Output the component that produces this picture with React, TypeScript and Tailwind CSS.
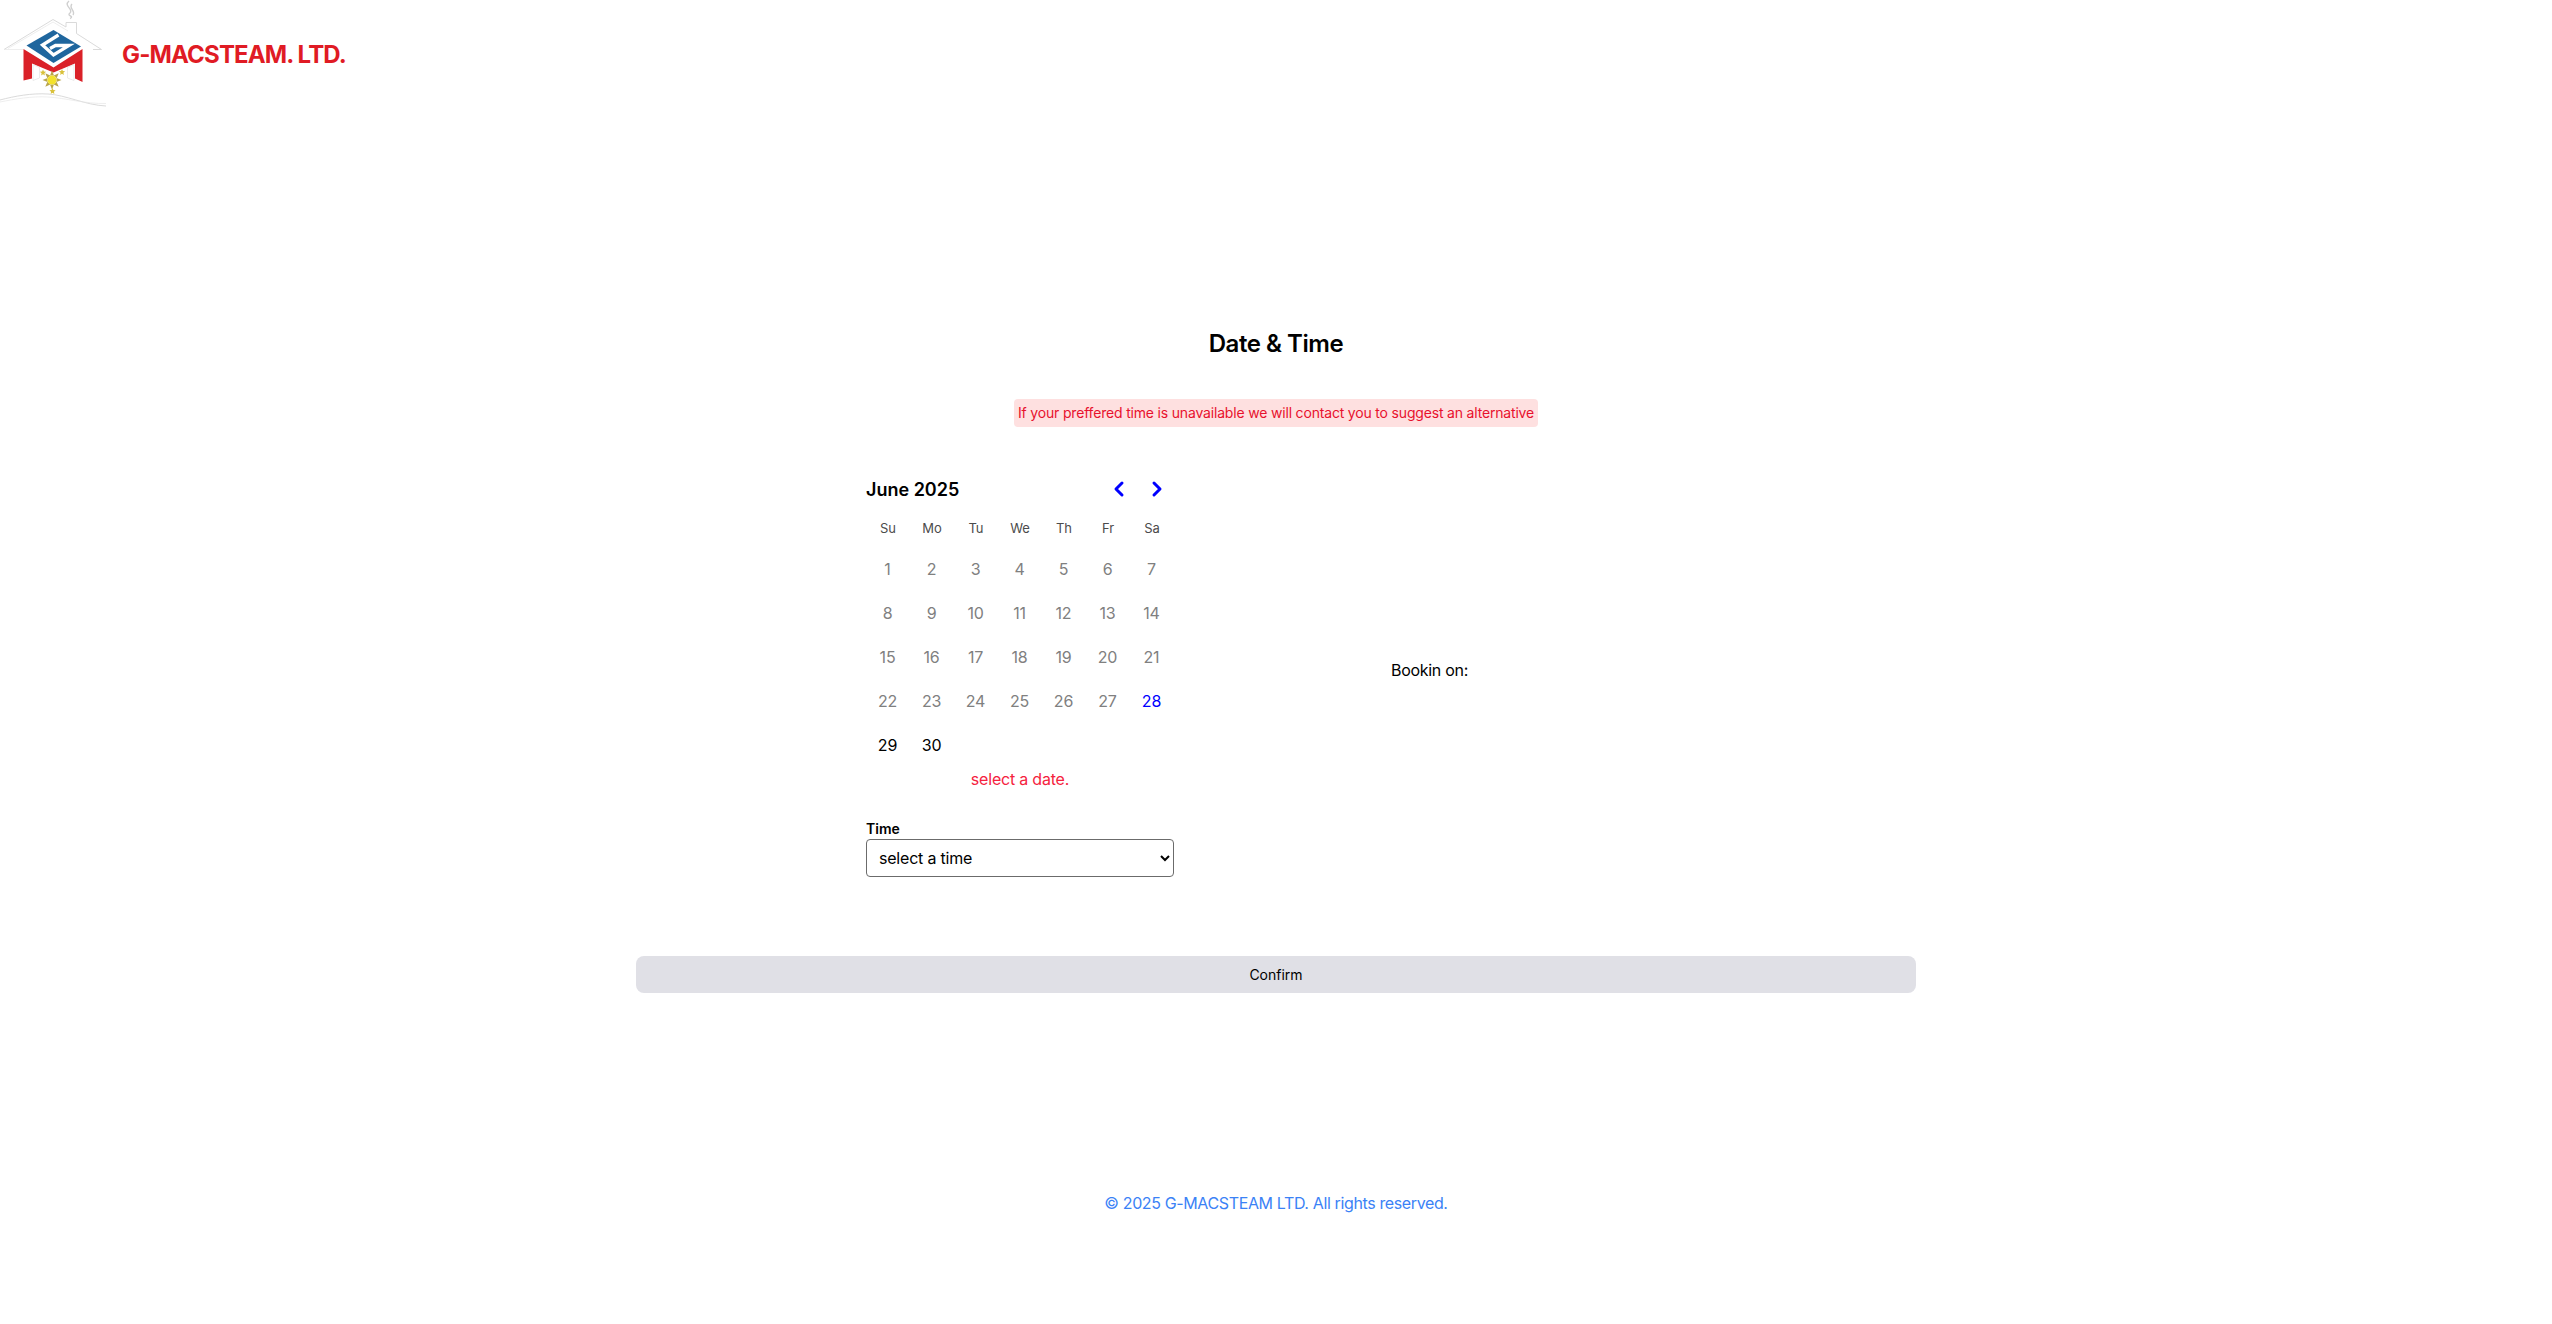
import { ChevronLeft, ChevronRight } from "lucide-react";

function Logo() {
  const rays = Array.from({ length: 8 }, (_, i) => i * 45);
  return (
    <svg width="120" height="115" viewBox="0 0 120 115" className="shrink-0">
      <path d="M4 49.500 L53 19.500 L66 27 V22.500 H76.500 V33.500 L101.500 49.500 H93" fill="none" stroke="#d6d6d6" strokeWidth="0.9" />
      <path d="M4 49.500 H23 M8 48.500 L53 22 L68 31" fill="none" stroke="#e6e6e6" strokeWidth="0.7" />
      <path d="M69 1 C63 6 74 9 70 13 C66 16 75 16 70 18.500 M72 4 C68 8 76 11 73 15" fill="none" stroke="#d0d0d0" strokeWidth="1.400" />
      <path d="M53.500 30 L81 46.500 L53.500 63 L26.500 45.500 Z" fill="#1f669e" />
      <path d="M58.500 35 L42.500 45 L53.500 55 L69 45.500 H55.500 L50 48.500" fill="none" stroke="#ffffff" strokeWidth="3.300" />
      <path d="M23.500 49 L53.500 67.500 L82.500 49 V82 L75 78.500 V63.500 L53.500 72.500 L32 63.500 V78.500 L23.500 80.500 Z" fill="#da2128" />
      <path d="M33 64.500 L39.500 67.500 V78 L33 80.500 Z M74 64.500 L67.500 67.500 V78 L74 80.500 Z" fill="#ffffff" stroke="#dddddd" strokeWidth="0.6" />
      <g transform="translate(52 80)">
        {rays.map((a) => (
          <path key={a} d="M-2 -4.500 L0 -9.500 L2 -4.500 Z" fill="#b9a54a" transform={`rotate(${a})`} />
        ))}
        <circle r="4.500" fill="#f3e22b" />
      </g>
      <path d="M43 69.500 l.9 2.100 2.200 .2 -1.700 1.400 .5 2.200 -1.900 -1.200 -1.900 1.200 .5 -2.200 -1.700 -1.400 2.200 -.2 Z" fill="#d9c13a" />
      <path d="M62 69 l.9 2.100 2.200 .2 -1.700 1.400 .5 2.200 -1.900 -1.200 -1.900 1.200 .5 -2.200 -1.700 -1.400 2.200 -.2 Z" fill="#d9c13a" />
      <path d="M52.500 88 l.9 2.100 2.200 .2 -1.700 1.400 .5 2.200 -1.900 -1.200 -1.900 1.200 .5 -2.200 -1.700 -1.400 2.200 -.2 Z" fill="#d9c13a" />
      <path d="M0 100 C15 96 32 93 48 94 C66 95 85 105 106 106" fill="none" stroke="#d6d6d6" strokeWidth="0.9" />
      <path d="M0 102 C15 99 32 96 48 97 C66 98 85 104 106 103.500" fill="none" stroke="#e6e6e6" strokeWidth="0.7" />
    </svg>
  );
}

const weekdays = ["Su", "Mo", "Tu", "We", "Th", "Fr", "Sa"];
const days = Array.from({ length: 30 }, (_, i) => i + 1);

function dayClass(d: number) {
  if (d === 28) return "text-[#0000ff]";
  if (d > 28) return "text-black";
  return "text-[#808080]";
}

export default function App() {
  return (
    <div className="min-h-[1324px] bg-white font-['Inter',sans-serif] text-black antialiased">
      <header className="flex h-[115px] items-center overflow-hidden pb-[6px]">
        <div className="-mb-[6px]">
          <Logo />
        </div>
        <span className="ml-[2px] text-2xl font-bold tracking-[-0.85px] text-[#e01b24]">G-MACSTEAM. LTD.</span>
      </header>

      <main className="mx-auto mt-[213px] flex w-[1280px] flex-col items-center">
        <h1 className="text-2xl leading-8 font-semibold tracking-[-0.45px]">Date &amp; Time</h1>
        <p className="mt-[39px] rounded bg-[#fee0e0] px-1 py-1 text-sm leading-5 tracking-[-0.18px] text-[#e8112d]">
          If your preffered time is unavailable we will contact you to suggest an alternative
        </p>

        <div className="mt-[46px] flex w-full pl-[180px]">
          <div className="w-[408px]">
            <div className="mx-auto w-[308px]">
              <div className="flex h-8 items-center justify-between">
                <span className="translate-y-px text-lg font-semibold">June 2025</span>
                <div className="mr-[5px] flex gap-[14px] text-[#0000ff]">
                  <ChevronLeft size={24} strokeWidth={3} />
                  <ChevronRight size={24} strokeWidth={3} />
                </div>
              </div>
              <div className="mt-[12px] grid grid-cols-7">
                {weekdays.map((w) => (
                  <div key={w} className="flex h-[24px] items-center justify-center text-[13px] text-[#4b4b4b]">
                    {w}
                  </div>
                ))}
              </div>
              <div className="mt-[6px] grid grid-cols-7">
                {days.map((d) => (
                  <div key={d} className={`flex h-11 items-center justify-center pr-px text-base tracking-[-0.2px] ${dayClass(d)}`}>
                    {d}
                  </div>
                ))}
              </div>
              <p className="text-center text-base leading-6 tracking-[-0.2px] text-[#f5223e]">select a date.</p>
              <label className="mt-[28px] block text-sm leading-5 font-semibold">Time</label>
              <select className="block h-[38px] w-full rounded border border-[#6b6b6b] bg-white pl-2 text-base tracking-[-0.2px] text-black">
                <option>select a time</option>
              </select>
            </div>
          </div>
          <div className="flex w-[408px] items-center justify-center pb-[11px] pl-[3px]">
            <span className="text-base leading-6 tracking-[-0.3px]">Bookin on:</span>
          </div>
        </div>

        <button className="mt-[79px] h-[37px] w-full rounded-lg bg-[#e0e0e6] text-sm text-black">Confirm</button>

        <footer className="mt-[198px] text-base leading-6 tracking-[-0.37px] text-[#3b82f6]">© 2025 G-MACSTEAM LTD. All rights reserved.</footer>
      </main>
    </div>
  );
}
